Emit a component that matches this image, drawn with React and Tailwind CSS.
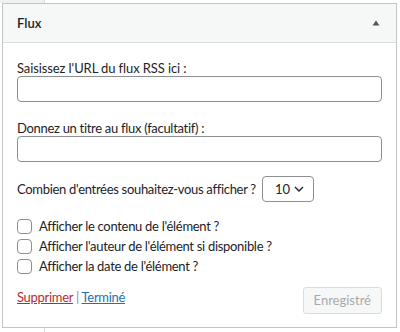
export default function App() {
  const font = { fontFamily: 'Lato, "Noto Sans", sans-serif' };
  return (
    <div className="w-[400px] h-[332px] bg-white relative overflow-hidden text-[13px] text-[#1d2327] tracking-[-0.3px]" style={font}>
      <div className="h-[3px] flex">
        <div className="w-[45px] bg-[#f0f0f1] border-r border-[#dcdcde]" />
      </div>
      <div className="mx-[2px] w-[395px] h-[325px] border border-[#c3c4c7] flex flex-col">
        <div className="h-[39px] bg-[#f6f7f7] border-b border-[#dcdcde] flex items-center justify-between pl-[14px] pr-[14px] shrink-0">
          <span className="font-semibold text-[13px] leading-none tracking-normal">Flux</span>
          <svg width="8" height="6" viewBox="0 0 8 6" className="mr-[2px]">
            <path d="M4 0.5 L7.5 5.5 L0.5 5.5 Z" fill="#50575e" />
          </svg>
        </div>
        <div className="flex-1 flex flex-col px-[14px] pt-[17px]">
          <label className="block leading-[16px] tracking-[-0.1px]">Saisissez l'URL du flux RSS ici :</label>
          <input className="block w-full h-[26px] border border-[#8c8f94] rounded-[4px] bg-white" />
          <label className="block leading-[16px] mt-[18px]">Donnez un titre au flux (facultatif) :</label>
          <input className="block w-full h-[26px] border border-[#8c8f94] rounded-[4px] bg-white" />
          <div className="flex items-center mt-[14px] h-[26px]">
            <span className="leading-[16px]">Combien d'entrées souhaitez-vous afficher ?</span>
            <div className="ml-[6px] w-[52px] h-[26px] border border-[#8c8f94] rounded-[4px] flex items-center pl-[12px] pr-[9px] justify-between tracking-normal">
              <span className="leading-none">10</span>
              <svg width="10" height="6" viewBox="0 0 10 6">
                <path d="M1 1 L5 5 L9 1" fill="none" stroke="#1d2327" strokeWidth="1.4" />
              </svg>
            </div>
          </div>
          <div className="mt-[14px] flex flex-col">
            {["Afficher le contenu de l'élément ?", "Afficher l'auteur de l'élément si disponible ?", "Afficher la date de l'élément ?"].map((t) => (
              <div key={t} className="flex items-center h-[20px]">
                <span className="w-[15px] h-[15px] border border-[#8c8f94] rounded-[4px] bg-white shrink-0" />
                <span className="ml-[7px] leading-[16px]">{t}</span>
              </div>
            ))}
          </div>
          <div className="flex items-start justify-between mt-[11px]">
            <div className="leading-[16px] mt-[2px]">
              <span className="text-[#b32d2e] underline">Supprimer</span>
              <span className="text-[#8c8f94]"> | </span>
              <span className="text-[#2271b1] underline">Terminé</span>
            </div>
            <div className="h-[27px] px-[10px] flex items-center border border-[#dcdcde] bg-[#f6f7f7] text-[#a7aaad] rounded-[3px] tracking-normal">Enregistré</div>
          </div>
        </div>
      </div>
      <div className="h-[4px] flex">
        <div className="w-[45px] border-r border-[#dcdcde]" />
      </div>
    </div>
  );
}
